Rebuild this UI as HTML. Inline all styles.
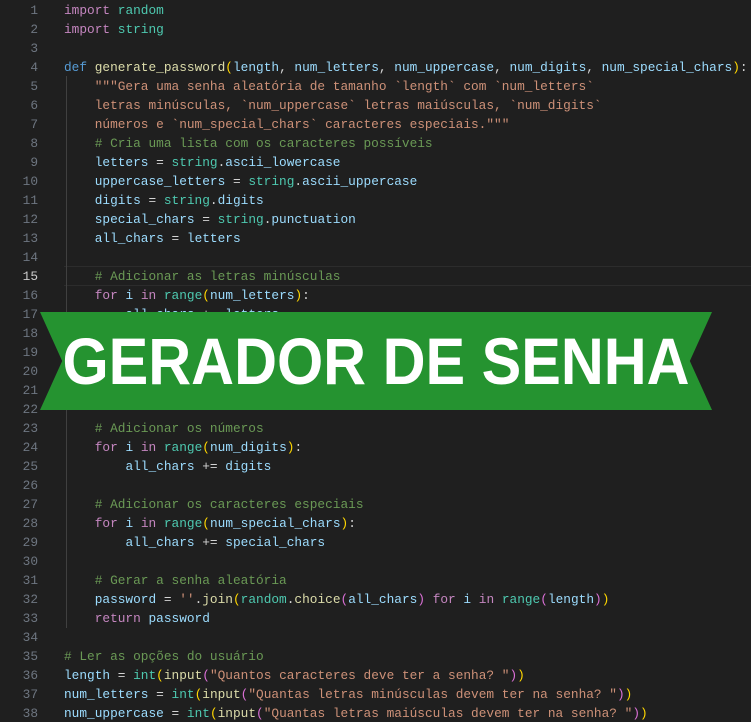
<!DOCTYPE html>
<html><head><meta charset="utf-8"><style>
html,body{margin:0;padding:0;background:#1f1f1f;width:751px;height:722px;overflow:hidden;position:relative}
.ln{position:absolute;left:0;top:1px;width:38px;text-align:right;font:12.8px/19px "Liberation Mono",monospace;color:#6e7681;white-space:pre}
.code{position:absolute;left:64px;top:1px;font:12.8px/19px "Liberation Mono",monospace;color:#d4d4d4;white-space:pre;margin:0}
.hl{position:absolute;left:64px;right:0;top:266px;height:18px;border-top:1px solid #2c2c2c;border-bottom:1px solid #2c2c2c}
.g{position:absolute;width:1px;background:#404040}
.k{color:#c586c0}.d{color:#569cd6}.f{color:#dcdcaa}.t{color:#4ec9b0}.v{color:#9cdcfe}.s{color:#ce9178}.c{color:#6a9955}.y{color:#ffd700}.p{color:#da70d6}
.banner{position:absolute;left:40px;top:312px;width:672px;height:98px;background:#259330;clip-path:polygon(0 0,100% 0,96.7% 50%,100% 100%,0 100%,3.3% 50%)}
.bt{position:absolute;left:-24px;top:312px;width:800px;height:98px;text-align:center;white-space:nowrap;font:bold 66px/98px "Liberation Sans",sans-serif;color:#fff;transform:scaleX(0.9);transform-origin:center}
</style></head><body>
<div class="hl"></div>
<div class="g" style="left:66px;top:76px;height:552px"></div>
<div class="ln">1
2
3
4
5
6
7
8
9
10
11
12
13
14
<span style="color:#ccc">15</span>
16
17
18
19
20
21
22
23
24
25
26
27
28
29
30
31
32
33
34
35
36
37
38</div>
<pre class="code"><span class="k">import</span> <span class="t">random</span>
<span class="k">import</span> <span class="t">string</span>

<span class="d">def</span> <span class="f">generate_password</span><span class="y">(</span><span class="v">length</span>, <span class="v">num_letters</span>, <span class="v">num_uppercase</span>, <span class="v">num_digits</span>, <span class="v">num_special_chars</span><span class="y">)</span>:
    <span class="s">"""Gera uma senha aleatória de tamanho `length` com `num_letters`</span>
<span class="s">    letras minúsculas, `num_uppercase` letras maiúsculas, `num_digits`</span>
<span class="s">    números e `num_special_chars` caracteres especiais."""</span>
    <span class="c"># Cria uma lista com os caracteres possíveis</span>
    <span class="v">letters</span> = <span class="t">string</span>.<span class="v">ascii_lowercase</span>
    <span class="v">uppercase_letters</span> = <span class="t">string</span>.<span class="v">ascii_uppercase</span>
    <span class="v">digits</span> = <span class="t">string</span>.<span class="v">digits</span>
    <span class="v">special_chars</span> = <span class="t">string</span>.<span class="v">punctuation</span>
    <span class="v">all_chars</span> = <span class="v">letters</span>

    <span class="c"># Adicionar as letras minúsculas</span>
    <span class="k">for</span> <span class="v">i</span> <span class="k">in</span> <span class="t">range</span><span class="y">(</span><span class="v">num_letters</span><span class="y">)</span>:
        <span class="v">all_chars</span> += <span class="v">letters</span>

    <span class="c"># Adicionar as letras maiúsculas</span>
    <span class="k">for</span> <span class="v">i</span> <span class="k">in</span> <span class="t">range</span><span class="y">(</span><span class="v">num_uppercase</span><span class="y">)</span>:
        <span class="v">all_chars</span> += <span class="v">uppercase_letters</span>

    <span class="c"># Adicionar os números</span>
    <span class="k">for</span> <span class="v">i</span> <span class="k">in</span> <span class="t">range</span><span class="y">(</span><span class="v">num_digits</span><span class="y">)</span>:
        <span class="v">all_chars</span> += <span class="v">digits</span>

    <span class="c"># Adicionar os caracteres especiais</span>
    <span class="k">for</span> <span class="v">i</span> <span class="k">in</span> <span class="t">range</span><span class="y">(</span><span class="v">num_special_chars</span><span class="y">)</span>:
        <span class="v">all_chars</span> += <span class="v">special_chars</span>

    <span class="c"># Gerar a senha aleatória</span>
    <span class="v">password</span> = <span class="s">''</span>.<span class="f">join</span><span class="y">(</span><span class="t">random</span>.<span class="f">choice</span><span class="p">(</span><span class="v">all_chars</span><span class="p">)</span> <span class="k">for</span> <span class="v">i</span> <span class="k">in</span> <span class="t">range</span><span class="p">(</span><span class="v">length</span><span class="p">)</span><span class="y">)</span>
    <span class="k">return</span> <span class="v">password</span>

<span class="c"># Ler as opções do usuário</span>
<span class="v">length</span> = <span class="t">int</span><span class="y">(</span><span class="f">input</span><span class="p">(</span><span class="s">"Quantos caracteres deve ter a senha? "</span><span class="p">)</span><span class="y">)</span>
<span class="v">num_letters</span> = <span class="t">int</span><span class="y">(</span><span class="f">input</span><span class="p">(</span><span class="s">"Quantas letras minúsculas devem ter na senha? "</span><span class="p">)</span><span class="y">)</span>
<span class="v">num_uppercase</span> = <span class="t">int</span><span class="y">(</span><span class="f">input</span><span class="p">(</span><span class="s">"Quantas letras maiúsculas devem ter na senha? "</span><span class="p">)</span><span class="y">)</span></pre>
<div class="banner"></div>
<div class="bt">GERADOR DE SENHA</div>
</body></html>
